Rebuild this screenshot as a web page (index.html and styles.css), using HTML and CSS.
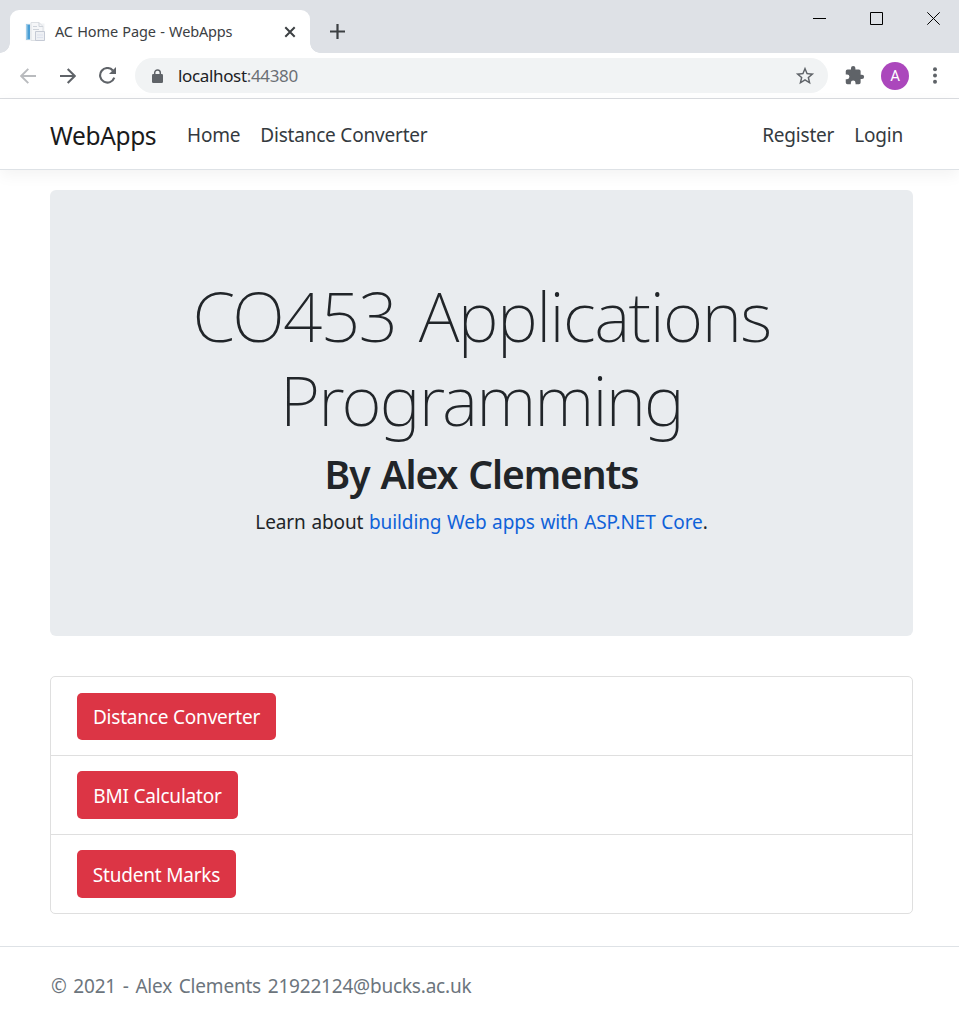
FILE: index.html
```html
<!DOCTYPE html>
<html lang="en">
<head>
<meta charset="utf-8">
<title>AC Home Page - WebApps</title>
<link rel="stylesheet" href="styles.css">
</head>
<body>
<div class="tabstrip">
  <div class="tab">
    <svg class="favicon" width="20" height="20" viewBox="0 0 20 20"><path d="M.5 1.500h19v17H.5z" fill="#f1f3f5"/><path d="M1 2.500h4v15H1z" fill="#4b9fd5"/><path d="M1 2.500h1.500v15H1z" fill="#9fcdea"/><path d="M6 .5h8l4 4v14H6z" fill="#f5f6f8" stroke="#dde0e4"/><path d="M14 .5v4h4M8 4.500h4M8 7.500h6" fill="none" stroke="#ced3da"/><path d="M10.500 9.500h9v9h-9z" fill="#eef0f4" stroke="#c5cad5"/><path d="M12 13h6M12 15.500h6" stroke="#dde2ee"/></svg>
    <span class="tab-title">AC Home Page - WebApps</span>
    <svg class="tab-close" width="12" height="12" viewBox="0 0 12 12"><path d="M1.300 1.300l9.400 9.400M10.700 1.300l-9.400 9.400" stroke="#3c4043" stroke-width="2"/></svg>
  </div>
  <svg class="new-tab" width="15" height="15" viewBox="0 0 15 15"><path d="M7.500 0v15M0 7.500h15" stroke="#3c4043" stroke-width="2.200"/></svg>
  <div class="window-controls">
    <svg width="13" height="13" viewBox="0 0 13 13"><path d="M0 6.500h13" stroke="#000"/></svg>
    <svg width="13" height="13" viewBox="0 0 13 13"><path d="M.5.500h12v12H.5z" fill="none" stroke="#000"/></svg>
    <svg width="13" height="13" viewBox="0 0 13 13"><path d="M.3.300l12.400 12.400M12.700.300L.3 12.700" stroke="#000"/></svg>
  </div>
</div>
<div class="toolbar">
  <svg class="back" width="16" height="16" viewBox="0 0 16 16"><path d="M16 8H1.500M8.300.900L1.200 8l7.100 7.100" fill="none" stroke="#b9bbbe" stroke-width="1.900"/></svg>
  <svg class="forward" width="16" height="16" viewBox="0 0 16 16"><path d="M0 8h14.500M7.700.900L14.800 8l-7.100 7.100" fill="none" stroke="#5f6368" stroke-width="2.100"/></svg>
  <svg class="reload" width="17" height="17" viewBox="0 0 17 17"><path d="M15.300 10.700A7.300 7.300 0 1 1 13.900 3.500" fill="none" stroke="#5f6368" stroke-width="2.100"/><path d="M17 0v7h-7z" fill="#5f6368"/></svg>
  <div class="address">
    <svg class="lock" width="11" height="14" viewBox="0 0 11 14"><path d="M2.700 6V3.700a2.800 2.800 0 0 1 5.600 0V6" fill="none" stroke="#5f6368" stroke-width="1.500"/><rect y="5" width="11" height="9" rx="1.200" fill="#5f6368"/></svg>
    <span class="url">localhost<span class="port">:44380</span></span>
    <svg class="star" width="22" height="22" viewBox="0 0 24 24"><path fill="#5f6368" d="M22 9.240l-7.190-.62L12 2 9.190 8.630 2 9.240l5.460 4.730L5.820 21 12 17.270 18.180 21l-1.630-7.030L22 9.240zM12 15.400l-3.760 2.270 1-4.280-3.320-2.880 4.380-.38L12 6.100l1.710 4.040 4.380.38-3.320 2.880 1 4.280L12 15.400z"/></svg>
  </div>
  <svg class="puzzle" width="21" height="21" viewBox="0 0 24 24"><path fill="#5f6368" d="M20.500 11H19V7a2 2 0 0 0-2-2h-4V3.500a2.500 2.500 0 0 0-5 0V5H4a2 2 0 0 0-2 2v3.800h1.500a2.700 2.700 0 0 1 0 5.400H2V20a2 2 0 0 0 2 2h3.800v-1.500a2.700 2.700 0 0 1 5.400 0V22H17a2 2 0 0 0 2-2v-4h1.500a2.500 2.500 0 0 0 0-5z"/></svg>
  <span class="avatar">A</span>
  <svg class="menu" width="4" height="17" viewBox="0 0 4 17"><g fill="#5f6368"><circle cx="2" cy="2.200" r="2"/><circle cx="2" cy="8.500" r="2"/><circle cx="2" cy="14.800" r="2"/></g></svg>
</div>
<header class="navbar">
  <a class="brand">WebApps</a>
  <nav class="nav-main"><a>Home</a><a>Distance Converter</a></nav>
  <nav class="nav-user"><a>Register</a><a>Login</a></nav>
</header>
<main class="container">
  <section class="jumbotron">
    <h1><span>CO453 Applications</span> <span class="second-line">Programming</span></h1>
    <h2>By Alex Clements</h2>
    <p>Learn about <a>building Web apps with ASP.NET Core</a>.</p>
  </section>
  <ul class="list-group">
    <li><a class="btn btn-distance">Distance Converter</a></li>
    <li><a class="btn btn-bmi">BMI Calculator</a></li>
    <li><a class="btn btn-marks">Student Marks</a></li>
  </ul>
</main>
<footer class="footer"><span>© 2021 - Alex Clements 21922124@bucks.ac.uk</span></footer>
</body>
</html>
```
FILE: styles.css
```css
* { box-sizing: border-box; }
html, body { height: 100%; }
body {
  margin: 0;
  display: flex;
  flex-direction: column;
  overflow: hidden;
  background: #fff;
  color: #212529;
  font: 400 19px/30px "Noto Sans", "Open Sans", sans-serif;
  letter-spacing: -0.2px;
  white-space: nowrap;
}
svg { display: block; flex: none; }
h1, h2, p, ul { margin: 0; padding: 0; }

.tabstrip {
  flex: none;
  display: flex;
  height: 53px;
  padding: 10px 19px 0 10px;
  background: #dee1e6;
}
.tab {
  position: relative;
  display: flex;
  align-items: center;
  width: 300px;
  height: 43px;
  padding: 0 14px 0 15px;
  border-radius: 9px 9px 0 0;
  background: #fff;
}
.tab::before, .tab::after {
  content: "";
  position: absolute;
  bottom: 0;
  width: 10px;
  height: 10px;
}
.tab::before { left: -10px; background: radial-gradient(circle at 0 0, transparent 9.500px, #fff 10px); }
.tab::after { right: -10px; background: radial-gradient(circle at 100% 0, transparent 9.500px, #fff 10px); }
.tab-title { margin: 0 0 2px 10px; font-size: 14.500px; letter-spacing: -0.15px; word-spacing: 0.8px; color: #3c4043; }
.tab-close { margin-left: auto; }
.new-tab { margin: 14px 0 0 20px; }
.window-controls { display: flex; gap: 44px; margin: 2px 0 0 auto; }

.toolbar {
  flex: none;
  display: flex;
  align-items: center;
  height: 46px;
  padding: 0 22px 0 20px;
  border-bottom: 1px solid #dadce0;
}
.forward { margin-left: 24px; }
.reload { margin-left: 23px; }
.address {
  display: flex;
  align-items: center;
  width: 693px;
  height: 35px;
  margin-left: 19px;
  padding: 0 12px 0 17px;
  border-radius: 18px;
  background: #f1f3f4;
}
.url { margin-left: 15px; font-size: 17px; letter-spacing: -0.35px; color: #202124; }
.port { color: #6b6f74; }
.star { margin-left: auto; }
.puzzle { margin-left: 16px; }
.avatar {
  width: 28px;
  height: 28px;
  margin-left: 16px;
  border-radius: 50%;
  background: #ab47bc;
  color: #fff;
  font: 400 15px/28px Roboto, sans-serif;
  text-align: center;
}
.menu { margin-left: 24px; }

.navbar {
  flex: none;
  display: flex;
  align-items: center;
  height: 71px;
  padding: 2px 56px 0 50px;
  border-bottom: 1px solid #dee2e6;
  box-shadow: 0 5px 15px rgba(0, 0, 0, 0.05);
  color: #343a40;
}
.brand { width: 137px; padding-top: 2px; font-size: 24.500px; letter-spacing: -0.35px; color: #1a1a1a; }
.nav-main, .nav-user { display: flex; gap: 20px; }
.nav-user { margin-left: auto; }

.container { flex: none; padding: 20px 46px 0 50px; }
.jumbotron {
  height: 446px;
  padding: 83px 0 0;
  border-radius: 6px;
  background: #e9ecef;
  text-align: center;
}
h1 { font-size: 69px; line-height: 84px; font-weight: 250; letter-spacing: -1.550px; word-spacing: 6px; }
h1 span { display: block; }
h1 .second-line { letter-spacing: -1.800px; }
h2 { margin-top: 9px; font-size: 39px; line-height: 48px; font-weight: 600; letter-spacing: -1.100px; word-spacing: 2px; }
p { margin-top: 9px; letter-spacing: -0.1px; word-spacing: 0.8px; }
p a { color: #0f62d9; }
.list-group {
  margin-top: 40px;
  border: 1px solid #dfdfdf;
  border-radius: 5px;
  list-style: none;
}
.list-group li { display: flex; align-items: center; height: 79px; padding-left: 26px; border-bottom: 1px solid #dfdfdf; }
.list-group li:last-child { height: 78px; border-bottom: 0; }
.btn { height: 48px; border-radius: 5px; background: #dc3545; color: #fff; line-height: 50px; text-align: center; }
.btn-distance { width: 199px; height: 47px; margin-top: 1px; line-height: 48px; }
.btn-bmi { width: 161px; }
.btn-marks { width: 159px; }
.footer {
  margin-top: 32px;
  padding: 24px 0 0 51px;
  border-top: 1px solid #dee2e6;
  color: #6c757d;
  word-spacing: 2px;
}
```
